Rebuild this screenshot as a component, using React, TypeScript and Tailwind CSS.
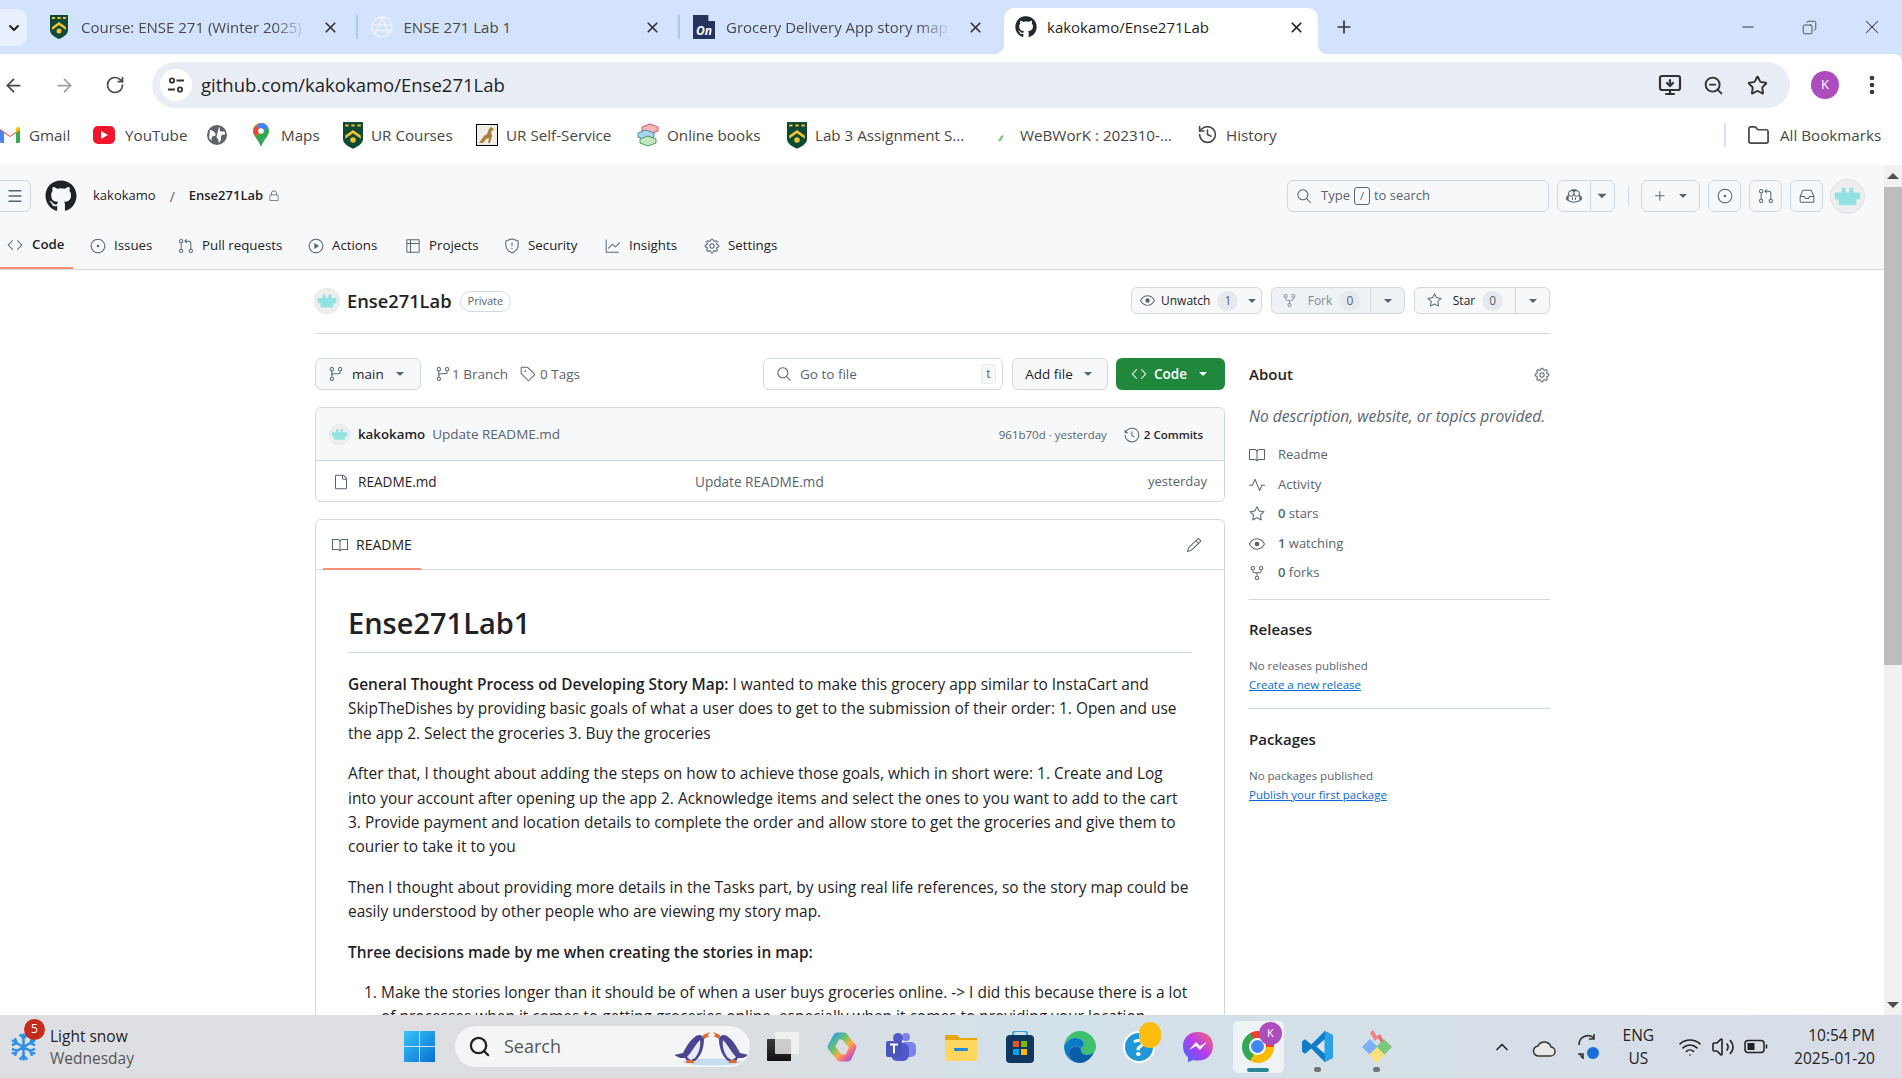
import type { ReactNode } from "react"
import {
  ArrowLeft,
  ArrowRight,
  ChevronDown,
  ChevronUp,
  Copy,
  EllipsisVertical,
  Folder,
  History,
  Menu,
  Minus,
  MonitorDown,
  Plus,
  RotateCw,
  Search,
  Star,
  Volume2,
  Wifi,
  X,
  ZoomOut,
} from "lucide-react"
import { FaGithub } from "react-icons/fa"
import {
  GoBook,
  GoCode,
  GoCopilot,
  GoEye,
  GoFile,
  GoGear,
  GoGitBranch,
  GoGitPullRequest,
  GoGraph,
  GoHistory,
  GoInbox,
  GoIssueOpened,
  GoLock,
  GoPencil,
  GoPlay,
  GoPlus,
  GoPulse,
  GoRepoForked,
  GoSearch,
  GoShield,
  GoStar,
  GoTable,
  GoTag,
  GoTriangleDown,
} from "react-icons/go"

function UrShield({ className = "w-[18px] h-[24px]" }: { className?: string }) {
  return (
    <svg viewBox="0 0 18 24" className={className}>
      <path d="M0 0h18v15c0 4-4 7-9 9-5-2-9-5-9-9z" fill="#0d4a35" />
      <path d="M0 5h18v-5H0z" fill="#0d4a35" />
      <path d="M2 2h3v2H2zM7.500 2h3v2h-3zM13 2h3v2h-3z" fill="#f2c230" />
      <path d="M2 12l7-5 7 5v3l-7-5-7 5z" fill="#f2c230" />
      <circle cx="9" cy="16" r="2.500" fill="#f2c230" />
    </svg>
  )
}

function Identicon({ className }: { className: string }) {
  return (
    <svg viewBox="0 0 36 36" className={className}>
      <circle cx="18" cy="18" r="17.500" fill="#eeeeee" stroke="#dcdfe3" />
      <path d="M5 14h7v-5h4v5h4v-5h4v5h7v7h-4v6H9v-6H5z" fill="#93e2e2" />
    </svg>
  )
}

function OpenFrameTab({ title, icon, active, fade }: { title: string; icon: ReactNode; active?: boolean; fade?: boolean }) {
  if (active) {
    return (
      <div className="relative flex h-[46px] w-[314px] shrink-0 items-center rounded-t-[10px] bg-white pb-[8px] pl-[11px] pr-[13px]">
        <span className="absolute bottom-0 -left-[10px] h-[10px] w-[10px] bg-[radial-gradient(circle_at_0_0,transparent_10px,white_10.5px)]" />
        <span className="absolute -right-[10px] bottom-0 h-[10px] w-[10px] bg-[radial-gradient(circle_at_100%_0,transparent_10px,white_10.5px)]" />
        {icon}
        <span className="ml-[10px] flex-1 truncate text-[15px] text-[#1f1f1f]">{title}</span>
        <X className="h-[17px] w-[17px] text-[#222]" strokeWidth={2.4} />
      </div>
    )
  }
  return (
    <div className="flex h-[46px] w-[320.5px] shrink-0 items-center pb-[8px] pl-[13px] pr-[17px]">
      <span className="flex w-[22px] shrink-0 justify-center">{icon}</span>
      <span
        className={
          fade
            ? "ml-[11px] w-[226px] overflow-hidden whitespace-nowrap text-[15px] text-[#474747] [mask-image:linear-gradient(to_right,black_85%,transparent)]"
            : "ml-[11px] w-[226px] overflow-hidden whitespace-nowrap text-[15px] text-[#474747]"
        }
      >
        {title}
      </span>
      <X className="ml-auto h-[17px] w-[17px] text-[#333]" strokeWidth={2.4} />
    </div>
  )
}

function TabStrip() {
  return (
    <div className="flex h-[54px] items-end bg-[#d3e3fd]">
      <div className="mb-[8px] flex h-[37px] w-[27px] items-center justify-center rounded-r-[10px] bg-[#e8f0fe]">
        <ChevronDown className="h-[16px] w-[16px] text-[#222]" strokeWidth={3} />
      </div>
      <div className="ml-[8px] flex items-center">
        <OpenFrameTab fade title="Course: ENSE 271 (Winter 2025)" icon={<UrShield />} />
        <span className="mb-[8px] h-[24px] w-[2px] bg-[#a8c7fa]" />
        <OpenFrameTab
          title="ENSE 271 Lab 1"
          icon={
            <svg viewBox="0 0 22 22" className="h-[22px] w-[22px]" fill="none" stroke="#f4f7fd" strokeWidth="1.200">
              <circle cx="11" cy="11" r="10" />
              <path d="M11 1L4 19M11 1l7 18M3 9h16M3 14.500h16" />
            </svg>
          }
        />
        <span className="mb-[8px] h-[24px] w-[2px] bg-[#a8c7fa]" />
        <OpenFrameTab
          fade
          title="Grocery Delivery App story map"
          icon={
            <div className="flex h-[24px] w-[22px] items-end justify-center bg-[#25345f] pb-[2px] text-[12px] font-bold italic leading-none text-white [clip-path:polygon(0_0,70%_0,70%_25%,100%_25%,100%_100%,0_100%)]">
              On
            </div>
          }
        />
      </div>
      <div className="ml-[3.5px]">
        <OpenFrameTab active title="kakokamo/Ense271Lab" icon={<FaGithub className="h-[22px] w-[22px] shrink-0 text-[#24292f]" />} />
      </div>
      <div className="mb-[17px] ml-[16px]">
        <Plus className="h-[20px] w-[20px] text-[#333]" strokeWidth={2} />
      </div>
      <div className="mb-[16px] ml-auto flex items-center text-[#333]">
        <Minus className="h-[18px] w-[18px]" strokeWidth={1.3} />
        <Copy className="ml-[45px] h-[15px] w-[15px] -scale-x-100" strokeWidth={1.3} />
        <X className="ml-[44px] mr-[19px] h-[22px] w-[22px]" strokeWidth={1.1} />
      </div>
    </div>
  )
}

function Toolbar() {
  return (
    <div className="flex h-[54px] items-start rounded-tr-[8px] bg-white pt-[8px]">
      <div className="flex h-[46px] items-center text-[#474747]">
        <ArrowLeft className="ml-[3px] h-[21px] w-[21px]" strokeWidth={2} />
        <ArrowRight className="ml-[30px] h-[21px] w-[21px] text-[#a0a0a0]" strokeWidth={2} />
        <RotateCw className="ml-[30px] h-[20px] w-[20px]" strokeWidth={2} />
      </div>
      <div className="ml-[27px] flex h-[46px] w-[1638px] items-center rounded-full bg-[#e9edf6] pl-[8px] pr-[22px]">
        <div className="flex h-[32px] w-[32px] items-center justify-center rounded-full bg-white">
          <svg viewBox="0 0 18 18" className="h-[18px] w-[18px]" fill="none" stroke="#333" strokeWidth="1.800">
            <circle cx="5" cy="4.500" r="2.200" />
            <path d="M9.500 4.500H17M1 13.500h7" />
            <circle cx="13" cy="13.500" r="2.200" />
          </svg>
        </div>
        <span className="ml-[9px] text-[18.5px] text-[#1f1f1f]">github.com/kakokamo/Ense271Lab</span>
        <MonitorDown className="ml-auto h-[24px] w-[24px] text-[#333]" strokeWidth={2.2} />
        <ZoomOut className="ml-[21px] h-[21px] w-[21px] text-[#333]" strokeWidth={2.2} />
        <Star className="ml-[23px] h-[21px] w-[21px] text-[#333]" strokeWidth={2.2} />
      </div>
      <div className="ml-[21px] mt-[9px] flex h-[28px] w-[28px] items-center justify-center rounded-full bg-[#ad4cbc] text-[13px] text-white">
        K
      </div>
      <EllipsisVertical className="ml-[21px] mt-[11px] h-[24px] w-[24px] text-[#333]" strokeWidth={2.6} />
    </div>
  )
}

function Bookmark({ icon, label, cls, gap = "ml-[8px]" }: { icon: ReactNode; label?: string; cls: string; gap?: string }) {
  return (
    <div className={`flex shrink-0 items-center ${cls}`}>
      {icon}
      {label && <span className={`${gap} whitespace-nowrap text-[15.2px] text-[#474747]`}>{label}</span>}
    </div>
  )
}

function BookmarksBar() {
  return (
    <div className="flex h-[57px] items-center bg-white pb-[3px]">
      <Bookmark
        cls="w-[93px]"
        gap="ml-[9px]"
        label="Gmail"
        icon={
          <svg viewBox="0 0 20 16" className="h-[16px] w-[20px]">
            <path d="M0 2l10 7 10-7v12a2 2 0 0 1-2 2h-2V6l-6 4-6-4v10H2a2 2 0 0 1-2-2z" fill="#ea4335" />
            <path d="M0 3v11a2 2 0 0 0 2 2h2V6z" fill="#4285f4" />
            <path d="M16 6v10h2a2 2 0 0 0 2-2V3z" fill="#34a853" />
            <path d="M16 2v4l4-3V2c0-2-2-2.500-3-1.500z" fill="#fbbc04" />
          </svg>
        }
      />
      <Bookmark
        cls="w-[114px]"
        gap="ml-[10px]"
        label="YouTube"
        icon={
          <div className="flex h-[18px] w-[22px] items-center justify-center rounded-[5px] bg-[#f0142c]">
            <div className="h-0 w-0 border-y-[4px] border-l-[7px] border-y-transparent border-l-white" />
          </div>
        }
      />
      <Bookmark
        cls="w-[46px]"
        icon={
          <svg viewBox="0 0 20 20" className="h-[20px] w-[20px]">
            <circle cx="10" cy="10" r="10" fill="#5f6368" />
            <path d="M3 5c3 0 4 2 5 3s1 3-1 3-3 2-2 5l-3-3zM12 2c2 2 0 3 1 4s3 0 5 1v3c-2-1-4 0-4 2s0 4-2 6l-1-4c-1-1-2-2-1-4z" fill="#fff" />
          </svg>
        }
      />
      <Bookmark
        cls="w-[90px]"
        gap="ml-[12px]"
        label="Maps"
        icon={
          <svg viewBox="0 0 16 24" className="h-[24px] w-[16px]">
            <path d="M8 0a8 8 0 0 1 8 8c0 5-5 8-8 16-3-8-8-11-8-16a8 8 0 0 1 8-8z" fill="#34a853" />
            <path d="M8 0a8 8 0 0 1 7 4L3 13C1 11 0 9.500 0 8a8 8 0 0 1 8-8z" fill="#fbbc04" />
            <path d="M8 0a8 8 0 0 1 7 4l-5 5-7-6a8 8 0 0 1 5-3z" fill="#4285f4" />
            <path d="M3 2.500L8 8l-5 5C1 11 0 9.500 0 8a8 8 0 0 1 3-5.500z" fill="#e8453c" />
            <circle cx="8" cy="8" r="2.800" fill="#fff" />
          </svg>
        }
      />
      <Bookmark cls="w-[133px]" label="UR Courses" icon={<UrShield className="h-[27px] w-[20px]" />} />
      <Bookmark
        cls="w-[161px]"
        label="UR Self-Service"
        icon={
          <div className="flex h-[22px] w-[22px] items-center justify-center border border-black bg-[#f0efe6]">
            <svg viewBox="0 0 20 20" className="h-[20px] w-[20px]">
              <path d="M2 18l5-7 3-2 2-5 2-2 3 2-3 3 1 4-2 7h-2l1-5-3 1-3 4z" fill="#a8813c" />
            </svg>
          </div>
        }
      />
      <Bookmark
        cls="w-[150px]"
        label="Online books"
        icon={
          <svg viewBox="0 0 22 24" className="h-[24px] w-[22px]">
            <path d="M5 4l8-3 8 3v4l-8 3-8-3z" fill="#f5b5b5" stroke="#c65b5b" />
            <path d="M1 10l8-3 8 3v4l-8 3-8-3z" fill="#a8d4ee" stroke="#4d8bb0" />
            <path d="M3 16l8-3 8 3v4l-8 3-8-3z" fill="#c0e8c0" stroke="#4f9a57" />
          </svg>
        }
      />
      <Bookmark cls="w-[210px]" label="Lab 3 Assignment S..." icon={<UrShield className="h-[27px] w-[20px]" />} />
      <Bookmark
        cls="w-[200px]"
        gap="ml-[15px]"
        label="WeBWorK : 202310-..."
        icon={
          <svg viewBox="0 0 8 8" className="mt-[6px] h-[8px] w-[8px]">
            <path d="M1 7l3-5 3-1-3 6z" fill="#7cc576" />
          </svg>
        }
      />
      <Bookmark cls="w-[527px]" label="History" icon={<History className="h-[21px] w-[21px] text-[#474747]" strokeWidth={1.8} />} />
      <span className="h-[24px] w-[2px] bg-[#d3e3fd]" />
      <Bookmark
        cls="ml-[21px]"
        gap="ml-[10px]"
        label="All Bookmarks"
        icon={<Folder className="h-[23px] w-[23px] text-[#474747]" strokeWidth={1.8} />}
      />
    </div>
  )
}

const navTabs = [
  { label: "Issues", Icon: GoIssueOpened, w: "w-[88px]" },
  { label: "Pull requests", Icon: GoGitPullRequest, w: "w-[130px]" },
  { label: "Actions", Icon: GoPlay, w: "w-[97px]" },
  { label: "Projects", Icon: GoTable, w: "w-[99px]" },
  { label: "Security", Icon: GoShield, w: "w-[101px]" },
  { label: "Insights", Icon: GoGraph, w: "w-[99px]" },
  { label: "Settings", Icon: GoGear, w: "w-[90px]" },
]

function IconBox({ children }: { children: ReactNode }) {
  return <div className="ml-[8px] flex h-[32px] w-[33px] items-center justify-center rounded-[6px] border border-[#d1d9e0] text-[#59636e]">{children}</div>
}

function PageHeader() {
  return (
    <header className="h-[105px] border-b border-[#d1d9e0] bg-[#f6f8fa]">
      <div className="flex h-[56px] items-center pt-[15px] pb-[9px]">
        <div className="flex h-[32px] w-[31px] items-center justify-center rounded-r-[6px] border border-l-0 border-[#d1d9e0] text-[#59636e]">
          <Menu className="h-[18px] w-[18px]" strokeWidth={1.8} />
        </div>
        <FaGithub className="ml-[14px] h-[32px] w-[32px] text-[#1f2328]" />
        <span className="ml-[16px] text-[13px] text-[#1f2328]">kakokamo</span>
        <span className="ml-[14px] text-[14px] text-[#59636e]">/</span>
        <span className="ml-[14px] text-[13px] font-semibold text-[#1f2328]">Ense271Lab</span>
        <GoLock className="ml-[5px] h-[12px] w-[12px] text-[#59636e]" />
        <div className="ml-auto flex items-center pr-[19px]">
          <div className="flex h-[32px] w-[262px] items-center rounded-[6px] border border-[#d1d9e0] pl-[8px] text-[13px] text-[#59636e]">
            <GoSearch className="h-[16px] w-[16px]" />
            <span className="ml-[9px]">Type</span>
            <span className="ml-[4px] flex h-[18px] w-[16px] items-center justify-center rounded-[3px] border border-[#59636e] text-[11px]">/</span>
            <span className="ml-[4px]">to search</span>
          </div>
          <div className="ml-[8px] flex h-[32px] w-[58px] items-center rounded-[6px] border border-[#d1d9e0] text-[#59636e]">
            <div className="flex h-full w-[33px] items-center justify-center border-r border-[#d1d9e0]">
              <GoCopilot className="h-[16px] w-[16px]" />
            </div>
            <GoTriangleDown className="ml-[3px] h-[16px] w-[16px]" />
          </div>
          <span className="ml-[13px] h-[20px] w-px bg-[#d1d9e0]" />
          <div className="ml-[12px] flex h-[32px] w-[59px] items-center justify-center gap-[8px] rounded-[6px] border border-[#d1d9e0] text-[#59636e]">
            <GoPlus className="h-[16px] w-[16px]" />
            <GoTriangleDown className="h-[14px] w-[14px]" />
          </div>
          <IconBox>
            <GoIssueOpened className="h-[16px] w-[16px]" />
          </IconBox>
          <IconBox>
            <GoGitPullRequest className="h-[16px] w-[16px]" />
          </IconBox>
          <IconBox>
            <GoInbox className="h-[16px] w-[16px]" />
          </IconBox>
          <Identicon className="ml-[7px] h-[35px] w-[35px]" />
        </div>
      </div>
      <nav className="flex h-[48px] items-center">
        <div className="mr-[17px] flex h-full w-[73px] items-center border-b-2 border-[#fd8c73] pl-[7px] pt-[2px] text-[#1f2328]">
          <GoCode className="h-[16px] w-[16px] text-[#59636e]" />
          <span className="ml-[9px] text-[13.3px] font-semibold">Code</span>
        </div>
        {navTabs.map(({ label, Icon, w }) => (
          <div key={label} className={`mt-[2px] flex items-center ${w}`}>
            <Icon className="h-[16px] w-[16px] text-[#59636e]" />
            <span className="ml-[8px] text-[13.3px] text-[#1f2328]">{label}</span>
          </div>
        ))}
      </nav>
    </header>
  )
}

function SplitButton({ Icon, label, count, muted, plain, w }: { Icon: typeof GoEye; label: string; count: string; muted?: boolean; plain?: boolean; w: string }) {
  return (
    <div className={`flex h-[27px] items-center rounded-[6px] border border-[#d1d9e0] ${w} ${muted ? "bg-[#eff2f5] text-[#818b98]" : "bg-[#f6f8fa] text-[#1f2328]"}`}>
      <div className={plain ? "flex h-full flex-1 items-center justify-center pl-[8px]" : "flex h-full flex-1 items-center justify-center border-r border-[#d1d9e0]"}>
        <Icon className={muted ? "h-[15px] w-[15px] text-[#818b98]" : "h-[15px] w-[15px] text-[#59636e]"} />
        <span className={plain ? "ml-[6px] text-[12px] font-medium" : "ml-[11px] text-[12px] font-medium"}>{label}</span>
        <span className="ml-[7px] flex h-[20px] w-[21px] items-center justify-center rounded-full bg-[#e6eaef] text-[12px] text-[#59636e]">{count}</span>
      </div>
      <div className={plain ? "flex w-[27px] shrink-0 items-center justify-center text-[#59636e]" : "flex w-[33px] shrink-0 items-center justify-center text-[#59636e]"}>
        <GoTriangleDown className="h-[14px] w-[14px]" />
      </div>
    </div>
  )
}

function RepoHead() {
  return (
    <div className="flex h-[64px] items-start border-b border-[#d1d9e0] pt-[17px]">
      <div className="flex h-[28px] items-center">
        <Identicon className="-ml-px h-[26px] w-[26px]" />
        <span className="ml-[7px] text-[18.3px] font-semibold text-[#1f2328]">Ense271Lab</span>
        <span className="ml-[8px] flex h-[21px] items-center rounded-full border border-[#d1d9e0] px-[7px] text-[11px] font-medium text-[#59636e]">Private</span>
      </div>
      <div className="ml-auto flex gap-[9px]">
        <SplitButton plain Icon={GoEye} label="Unwatch" count="1" w="w-[131px]" />
        <SplitButton muted Icon={GoRepoForked} label="Fork" count="0" w="w-[134px]" />
        <SplitButton Icon={GoStar} label="Star" count="0" w="w-[136px]" />
      </div>
    </div>
  )
}

function BranchRow() {
  return (
    <div className="flex h-[32px] items-center text-[13.5px]">
      <div className="flex h-full w-[106px] items-center rounded-[6px] border border-[#d1d9e0] bg-[#f6f8fa] pl-[12px] font-medium text-[#1f2328]">
        <GoGitBranch className="h-[16px] w-[16px] text-[#59636e]" />
        <span className="ml-[8px]">main</span>
        <GoTriangleDown className="ml-[9px] h-[14px] w-[14px] text-[#59636e]" />
      </div>
      <GoGitBranch className="ml-[14px] h-[16px] w-[16px] text-[#59636e]" />
      <span className="ml-[1px] font-medium text-[#59636e]">1 Branch</span>
      <GoTag className="ml-[12px] h-[16px] w-[16px] text-[#59636e]" />
      <span className="ml-[4px] font-medium text-[#59636e]">0 Tags</span>
      <div className="ml-auto flex h-full w-[240px] items-center rounded-[6px] border border-[#d1d9e0] pl-[12px] pr-[6px] text-[#59636e]">
        <GoSearch className="h-[16px] w-[16px]" />
        <span className="ml-[8px]">Go to file</span>
        <span className="ml-auto flex h-[20px] w-[15px] items-center justify-center rounded-[3px] border border-[#e6eaef] bg-[#f6f8fa] text-[12px]">t</span>
      </div>
      <div className="ml-[9px] flex h-full w-[96px] items-center justify-center gap-[8px] rounded-[6px] border border-[#d1d9e0] bg-[#f6f8fa] font-medium text-[#1f2328]">
        Add file
        <GoTriangleDown className="h-[14px] w-[14px] text-[#59636e]" />
      </div>
      <div className="ml-[8px] flex h-full w-[109px] items-center justify-center rounded-[6px] bg-[#1f883d] font-semibold text-white">
        <GoCode className="h-[16px] w-[16px]" />
        <span className="ml-[7px]">Code</span>
        <GoTriangleDown className="ml-[9px] h-[14px] w-[14px]" />
      </div>
    </div>
  )
}

function CommitBox() {
  return (
    <div className="mt-[17px] h-[95px] overflow-hidden rounded-[6px] border border-[#d1d9e0]">
      <div className="flex h-[53px] items-center border-b border-[#d1d9e0] bg-[#f6f8fa] pl-[13px] pr-[21px] pt-[1px]">
        <Identicon className="h-[21px] w-[21px]" />
        <span className="ml-[8px] text-[13.3px] font-semibold text-[#1f2328]">kakokamo</span>
        <span className="ml-[7px] text-[13.5px] text-[#59636e]">Update README.md</span>
        <span className="ml-auto text-[11.5px] text-[#59636e]">961b70d · yesterday</span>
        <GoHistory className="ml-[17px] h-[16px] w-[16px] text-[#59636e]" />
        <span className="ml-[4px] text-[11.5px] font-semibold text-[#1f2328]">2 Commits</span>
      </div>
      <div className="flex h-[40px] items-center pl-[17px] pr-[17px] pt-[2px] text-[13.6px]">
        <GoFile className="h-[16px] w-[16px] text-[#59636e]" />
        <span className="ml-[9px] w-[337px] text-[#1f2328]">README.md</span>
        <span className="text-[#59636e]">Update README.md</span>
        <span className="ml-auto text-[13px] text-[#59636e]">yesterday</span>
      </div>
    </div>
  )
}

const para1 = [
  <>
    <b className="font-semibold">General Thought Process od Developing Story Map:</b> I wanted to make this grocery app similar to InstaCart and
  </>,
  "SkipTheDishes by providing basic goals of what a user does to get to the submission of their order: 1. Open and use",
  "the app 2. Select the groceries 3. Buy the groceries",
]
const para2 = [
  "After that, I thought about adding the steps on how to achieve those goals, which in short were: 1. Create and Log",
  "into your account after opening up the app 2. Acknowledge items and select the ones to you want to add to the cart",
  "3. Provide payment and location details to complete the order and allow store to get the groceries and give them to",
  "courier to take it to you",
]
const para3 = [
  "Then I thought about providing more details in the Tasks part, by using real life references, so the story map could be",
  "easily understood by other people who are viewing my story map.",
]

function Para({ lines }: { lines: ReactNode[] }) {
  return (
    <div className="mt-[16px]">
      {lines.map((line, i) => (
        <div key={i} className="h-[24.4px] whitespace-nowrap">
          {line}
        </div>
      ))}
    </div>
  )
}

function Readme() {
  return (
    <div className="mt-[17px] h-[600px] rounded-t-[6px] border border-[#d1d9e0]">
      <div className="flex h-[50px] items-stretch border-b border-[#d1d9e0] pl-[7px] pr-[22px]">
        <div className="flex h-[50px] w-[98px] items-center border-b-2 border-[#fd8c73] pl-[9px] pt-[1px]">
          <GoBook className="h-[16px] w-[16px] text-[#59636e]" />
          <span className="ml-[8px] text-[14px] font-medium text-[#1f2328]">README</span>
        </div>
        <div className="ml-auto flex items-center">
          <GoPencil className="h-[16px] w-[16px] text-[#59636e]" />
        </div>
      </div>
      <div className="px-[32px] text-[15.45px] leading-[24.4px] text-[#1f2328]">
        <h1 className="mt-[33px] h-[50px] border-b border-[#d1d9e0] text-[29px] font-semibold leading-[40px]">Ense271Lab1</h1>
        <div className="pt-[3px]">
          <Para lines={para1} />
          <Para lines={para2} />
          <Para lines={para3} />
          <Para lines={[<b className="font-semibold">Three decisions made by me when creating the stories in map:</b>]} />
        </div>
        <div className="mt-[16px] flex whitespace-nowrap">
          <span className="ml-[16px] w-[17px]">1.</span>
          <div>
            <div className="h-[24.4px]">Make the stories longer than it should be of when a user buys groceries online. -&gt; I did this because there is a lot</div>
            <div className="h-[24.4px]">of processes when it comes to getting groceries online, especially when it comes to providing your location</div>
          </div>
        </div>
      </div>
    </div>
  )
}

const aboutRows = [
  { Icon: GoBook, label: "Readme", cls: "h-[30px]" },
  { Icon: GoPulse, label: "Activity", cls: "h-[29px]" },
  { Icon: GoStar, label: "0 stars", num: true, cls: "h-[30px]" },
  { Icon: GoEye, label: "1 watching", num: true, cls: "h-[29px]" },
  { Icon: GoRepoForked, label: "0 forks", num: true, cls: "h-[30px]" },
]

function Sidebar() {
  return (
    <aside className="ml-[24px] w-[301px] text-[#59636e]">
      <div className="flex h-[33px] items-center text-[15px] font-semibold text-[#1f2328]">
        About
        <GoGear className="ml-auto h-[16px] w-[16px] text-[#59636e]" />
      </div>
      <p className="mt-[13px] h-[24px] whitespace-nowrap text-[15.6px] italic leading-[24px]">No description, website, or topics provided.</p>
      <div className="mt-[12px]">
        {aboutRows.map(({ Icon, label, num, cls }) => (
          <div key={label} className={`flex items-center text-[13px] ${cls}`}>
            <Icon className="h-[16px] w-[16px]" />
            <span className="ml-[13px]">
              {num ? <b className="font-semibold">{label.slice(0, 1)}</b> : null}
              {num ? label.slice(1) : label}
            </span>
          </div>
        ))}
      </div>
      <div className="mt-[11px] border-t border-[#d1d9e0] pt-[18px]">
        <div className="text-[15px] font-semibold leading-[22px] text-[#1f2328]">Releases</div>
        <div className="mt-[17px] text-[11.5px] leading-[18px]">No releases published</div>
        <div className="mt-[1px] text-[11.5px] leading-[18px] text-[#0969da] underline">Create a new release</div>
      </div>
      <div className="mt-[14px] border-t border-[#d1d9e0] pt-[19px]">
        <div className="text-[15px] font-semibold leading-[22px] text-[#1f2328]">Packages</div>
        <div className="mt-[17px] text-[11.5px] leading-[18px]">No packages published</div>
        <div className="mt-[1px] text-[11.5px] leading-[18px] text-[#0969da] underline">Publish your first package</div>
      </div>
    </aside>
  )
}

function Scrollbar() {
  return (
    <div className="flex w-[18px] shrink-0 flex-col items-stretch bg-[#f1f1f1]">
      <div className="flex h-[22px] items-center justify-center">
        <div className="h-0 w-0 border-x-[6px] border-b-[6px] border-x-transparent border-b-[#505050]" />
      </div>
      <div className="h-[478px] bg-[#bdbdbd]" />
      <div className="mb-[7px] mt-auto flex justify-center">
        <div className="h-0 w-0 border-x-[6px] border-t-[6px] border-x-transparent border-t-[#505050]" />
      </div>
    </div>
  )
}

function TaskIcon({ children, dot, active }: { children: ReactNode; dot?: boolean; active?: boolean }) {
  return (
    <div className="relative flex h-[52px] w-[59.4px] items-center justify-center">
      {active && <span className="absolute inset-y-0 left-[5px] right-[4px] rounded-[5px] bg-white/60" />}
      <span className="relative">{children}</span>
      {dot && <span className="absolute bottom-[1px] h-[5px] w-[7px] rounded-full bg-[#6f7378]" />}
      {active && <span className="absolute bottom-[1px] h-[4px] w-[22px] rounded-full bg-[#2b8697]" />}
    </div>
  )
}

function Penguin({ flip }: { flip?: boolean }) {
  return (
    <g transform={flip ? "translate(77 0) scale(-1 1)" : "translate(-4 0)"}>
      <path d="M3 28l9-2c3-6 7-13 13-17 3-2 6-1 7 1l6-2-5 4c0 7-2 14-6 19l-3 3h-8l-2-3-5 0z" fill="#4d4590" />
      <path d="M29 13c1 6-1 13-5 18l-4 2c-2-1-3-2-4-3 5-5 8-12 13-17z" fill="#e9e9f4" />
      <path d="M32 8l7-3-3 4 3 0-7 3z" fill="#e8662a" />
      <path d="M16 33l5 0 3 3h-9z" fill="#e8662a" />
    </g>
  )
}

function Taskbar() {
  return (
    <div className="flex h-[63px] shrink-0 items-center bg-[linear-gradient(90deg,#dedfe2,#dbdee1_40%,#d3e1ea_55%,#d8dde6)] pl-[10px] text-[#222]">
      <div className="relative flex w-[394px] shrink-0 items-center">
        <svg viewBox="0 0 28 32" className="h-[32px] w-[27px]" fill="none" stroke="#2f8fe8" strokeWidth="2.600">
          <path d="M14 2v28M2 9l24 14M26 9L2 23M10 3l4 4 4-4M10 29l4-4 4 4M2 14l5-2-2-5M26 18l-5 2 2 5M26 14l-5-2 2-5M2 18l5 2-2 5" />
        </svg>
        <span className="absolute -top-[6px] left-[14px] flex h-[21px] w-[21px] items-center justify-center rounded-full bg-[#c42b1c] text-[12px] text-white">5</span>
        <div className="ml-[13px] text-[15.5px] leading-[22px]">
          <div>Light snow</div>
          <div className="text-[#555]">Wednesday</div>
        </div>
      </div>
      <svg viewBox="0 0 32 32" className="h-[31px] w-[31px]">
        <defs>
          <linearGradient id="winGrad" x1="0" y1="0" x2="1" y2="1">
            <stop offset="0" stopColor="#35c5f8" />
            <stop offset="1" stopColor="#0a6fd4" />
          </linearGradient>
        </defs>
        <path d="M0 0h15.500v15.500H0zM16.500 0H32v15.500H16.500zM0 16.500h15.500V32H0zM16.500 16.500H32V32H16.500z" fill="url(#winGrad)" />
      </svg>
      <div className="ml-[20px] flex h-[41px] w-[295px] items-center rounded-full bg-[#f3f5f7] pl-[13px]">
        <Search className="h-[23px] w-[23px] text-[#222]" strokeWidth={2.4} />
        <span className="ml-[13px] text-[18px] text-[#555]">Search</span>
        <svg viewBox="0 0 72 40" className="ml-auto mr-[3px] h-[40px] w-[72px]">
          <ellipse cx="37" cy="35" rx="30" ry="3.500" fill="#c6dff0" />
          <Penguin />
          <Penguin flip />
        </svg>
      </div>
      <div className="ml-[3px] flex items-center">
        <TaskIcon>
          <div className="relative h-[30px] w-[32px]">
            <div className="absolute bottom-[1px] left-0 h-[22px] w-[24px] rounded-[1px] bg-[linear-gradient(#3b3b3b,#111)]" />
            <div className="absolute right-0 top-0 h-[22px] w-[24px] rounded-[1px] bg-[#f4f4f4]/80" />
          </div>
        </TaskIcon>
        <TaskIcon>
          <svg viewBox="0 0 32 32" className="h-[32px] w-[32px]" fill="none">
            <defs>
              <linearGradient id="copilotGrad" x1="0" y1="0" x2="1" y2="1">
                <stop offset="0" stopColor="#2f9fe8" />
                <stop offset="0.35" stopColor="#6fc26a" />
                <stop offset="0.6" stopColor="#f5b23e" />
                <stop offset="0.8" stopColor="#ef6a8a" />
                <stop offset="1" stopColor="#9a5ce0" />
              </linearGradient>
            </defs>
            <path d="M11 5h7l9 11-5 11h-8L5 16z" stroke="url(#copilotGrad)" strokeWidth="7" strokeLinejoin="round" />
          </svg>
        </TaskIcon>
        <TaskIcon>
          <svg viewBox="0 0 32 30" className="h-[30px] w-[32px]">
            <circle cx="21" cy="5" r="4" fill="#7b83eb" />
            <rect x="16" y="10" width="15" height="15" rx="5" fill="#7b83eb" />
            <circle cx="13" cy="6" r="5" fill="#5059c9" />
            <rect x="6" y="11" width="18" height="18" rx="6" fill="#5059c9" />
            <rect x="1" y="9" width="16" height="16" rx="2" fill="#4b53bc" />
            <path d="M5 12.500h8M9 12.500v9" stroke="#fff" strokeWidth="2" />
          </svg>
        </TaskIcon>
        <TaskIcon>
          <svg viewBox="0 0 32 28" className="h-[30px] w-[32px]">
            <path d="M0 2h12l3 3h17v4H0z" fill="#e8a700" />
            <path d="M0 7h32v19a2 2 0 0 1-2 2H2a2 2 0 0 1-2-2z" fill="#ffd75e" />
            <rect x="9" y="15" width="14" height="3" rx="1" fill="#1e88d9" />
          </svg>
        </TaskIcon>
        <TaskIcon>
          <svg viewBox="0 0 30 32" className="h-[32px] w-[30px]">
            <rect x="8" y="0" width="14" height="7" rx="3" fill="none" stroke="#37a3d8" strokeWidth="2" />
            <rect x="1" y="4" width="28" height="28" rx="4" fill="#10375e" />
            <path d="M8 10h6v6H8z" fill="#f25022" />
            <path d="M16 10h6v6h-6z" fill="#7fba00" />
            <path d="M8 18h6v6H8z" fill="#00a4ef" />
            <path d="M16 18h6v6h-6z" fill="#ffb900" />
          </svg>
        </TaskIcon>
        <TaskIcon>
          <svg viewBox="0 0 32 32" className="h-[32px] w-[32px]">
            <path d="M16 0a16 16 0 0 1 16 16c0 6-5 8-9 8-5 0-7-3-6-6 0-2 3-2 3-5 0-4-5-6-9-6C6 7 2 11 0 15 1 7 7 0 16 0z" fill="#3ec26f" />
            <path d="M0 15c2-4 6-8 11-8 4 0 9 2 9 6 0 2-2 3-3 4-4-3-12-2-12 6 0 4 4 9 11 9C7 32 0 25 0 15z" fill="#0c79c9" />
            <path d="M5 23c0-8 8-9 12-6-1 3 1 7 6 7 2 0 5-1 7-3-2 6-8 11-14 11C9 32 5 27 5 23z" fill="#0b5da8" />
          </svg>
        </TaskIcon>
        <TaskIcon>
          <div className="relative flex h-[32px] w-[32px] items-center justify-center rounded-full border-2 border-white bg-[#1f97d8] text-[24px] font-bold text-white">
            ?
            <span className="absolute -right-[8px] -top-[11px] h-[26px] w-[22px] rounded-full bg-[#fdbd10]" />
          </div>
        </TaskIcon>
        <TaskIcon>
          <svg viewBox="0 0 32 32" className="h-[32px] w-[32px]">
            <defs>
              <linearGradient id="msgGrad" x1="0" y1="1" x2="1" y2="0">
                <stop offset="0" stopColor="#3a6cf5" />
                <stop offset="0.5" stopColor="#b43cf0" />
                <stop offset="1" stopColor="#ff6a68" />
              </linearGradient>
            </defs>
            <path d="M16 1C7 1 1 7 1 15c0 5 2 9 5 11v5l5-2c2 .5 3 .5 5 .5 9 0 15-6 15-14.500S25 1 16 1z" fill="url(#msgGrad)" />
            <path d="M7 19l7-8 4 4 7-4-7 8-4-4z" fill="#fff" />
          </svg>
        </TaskIcon>
        <TaskIcon active>
          <div className="relative">
            <div className="flex h-[32px] w-[32px] items-center justify-center rounded-full bg-[conic-gradient(from_-30deg,#ea4335_0_120deg,#fbbc04_120deg_240deg,#34a853_240deg_360deg)]">
              <div className="h-[17px] w-[17px] rounded-full border-2 border-white bg-[#4285f4]" />
            </div>
            <span className="absolute -right-[8px] -top-[9px] flex h-[23px] w-[23px] items-center justify-center rounded-full bg-[#ad4cbc] text-[11px] text-white">K</span>
          </div>
        </TaskIcon>
        <TaskIcon dot>
          <svg viewBox="0 0 32 32" className="h-[33px] w-[33px]">
            <path d="M23 1l8 4v22l-8 4-13-13-6 5-3-2v-10l3-2 6 5z" fill="#0f7dc8" />
            <path d="M23 9l-8 7 8 7z" fill="#dfe5ea" />
            <path d="M23 1l8 4v22l-8 4z" fill="#2aa3ea" />
          </svg>
        </TaskIcon>
        <TaskIcon dot>
          <svg viewBox="0 0 32 34" className="h-[34px] w-[32px]">
            <path d="M1 17l8-8 8 8-8 8z" fill="#7eb1f5" />
            <path d="M15 17l8-8 8 8-8 8z" fill="#79c97a" />
            <path d="M8 25l8-8 8 8-8 8z" fill="#fbe07c" />
            <path d="M12 0l5 8-3 3-5-8z" fill="#f07f7f" />
            <path d="M19 4l4 7-3 2-4-7z" fill="#e57373" />
          </svg>
        </TaskIcon>
      </div>
      <ChevronUp className="ml-[86px] h-[20px] w-[20px] shrink-0 text-[#222]" strokeWidth={2} />
      <svg viewBox="0 0 24 20" className="ml-[20px] h-[20px] w-[24px] shrink-0">
        <path d="M7 19a5 5 0 0 1-1-10 7 7 0 0 1 13 1 4.500 4.500 0 0 1-1 9z" fill="#e9e9e9" stroke="#333" strokeWidth="1.500" />
      </svg>
      <svg viewBox="0 0 24 28" className="ml-[20px] h-[28px] w-[24px] shrink-0" fill="none" stroke="#333" strokeWidth="1.600">
        <path d="M3 12a9 9 0 0 1 15-7M18 1v5h-5M7 25a9 9 0 0 1-3-4M2 21h5v5" />
        <circle cx="17" cy="20" r="6" fill="#1b70d8" stroke="none" />
      </svg>
      <div className="ml-[15px] w-[46px] shrink-0 text-center text-[15.5px] leading-[23px]">
        <div>ENG</div>
        <div>US</div>
      </div>
      <Wifi className="ml-[17px] h-[24px] w-[24px] shrink-0" strokeWidth={1.6} />
      <Volume2 className="ml-[9px] h-[24px] w-[24px] shrink-0" strokeWidth={1.6} />
      <svg viewBox="0 0 24 14" className="ml-[9px] h-[15px] w-[24px] shrink-0" fill="none" stroke="#222" strokeWidth="1.500">
        <rect x="1" y="1" width="19" height="12" rx="3" />
        <rect x="3.500" y="3.500" width="7" height="7" fill="#222" stroke="none" />
        <path d="M22.500 5v4" />
      </svg>
      <div className="ml-auto mr-[27px] text-right text-[15.5px] leading-[23px]">
        <div>10:54 PM</div>
        <div>2025-01-20</div>
      </div>
    </div>
  )
}

export default function App() {
  return (
    <div className="flex h-[1078px] flex-col overflow-hidden bg-[#d3e3fd] font-['Open_Sans',sans-serif]">
      <TabStrip />
      <Toolbar />
      <BookmarksBar />
      <div className="flex min-h-0 flex-1 bg-white">
        <div className="min-w-0 flex-1 overflow-hidden">
          <PageHeader />
          <main className="ml-[315px] w-[1235px]">
            <RepoHead />
            <div className="mt-[24px] flex">
              <div className="w-[910px] shrink-0">
                <BranchRow />
                <CommitBox />
                <Readme />
              </div>
              <Sidebar />
            </div>
          </main>
        </div>
        <Scrollbar />
      </div>
      <Taskbar />
    </div>
  )
}
